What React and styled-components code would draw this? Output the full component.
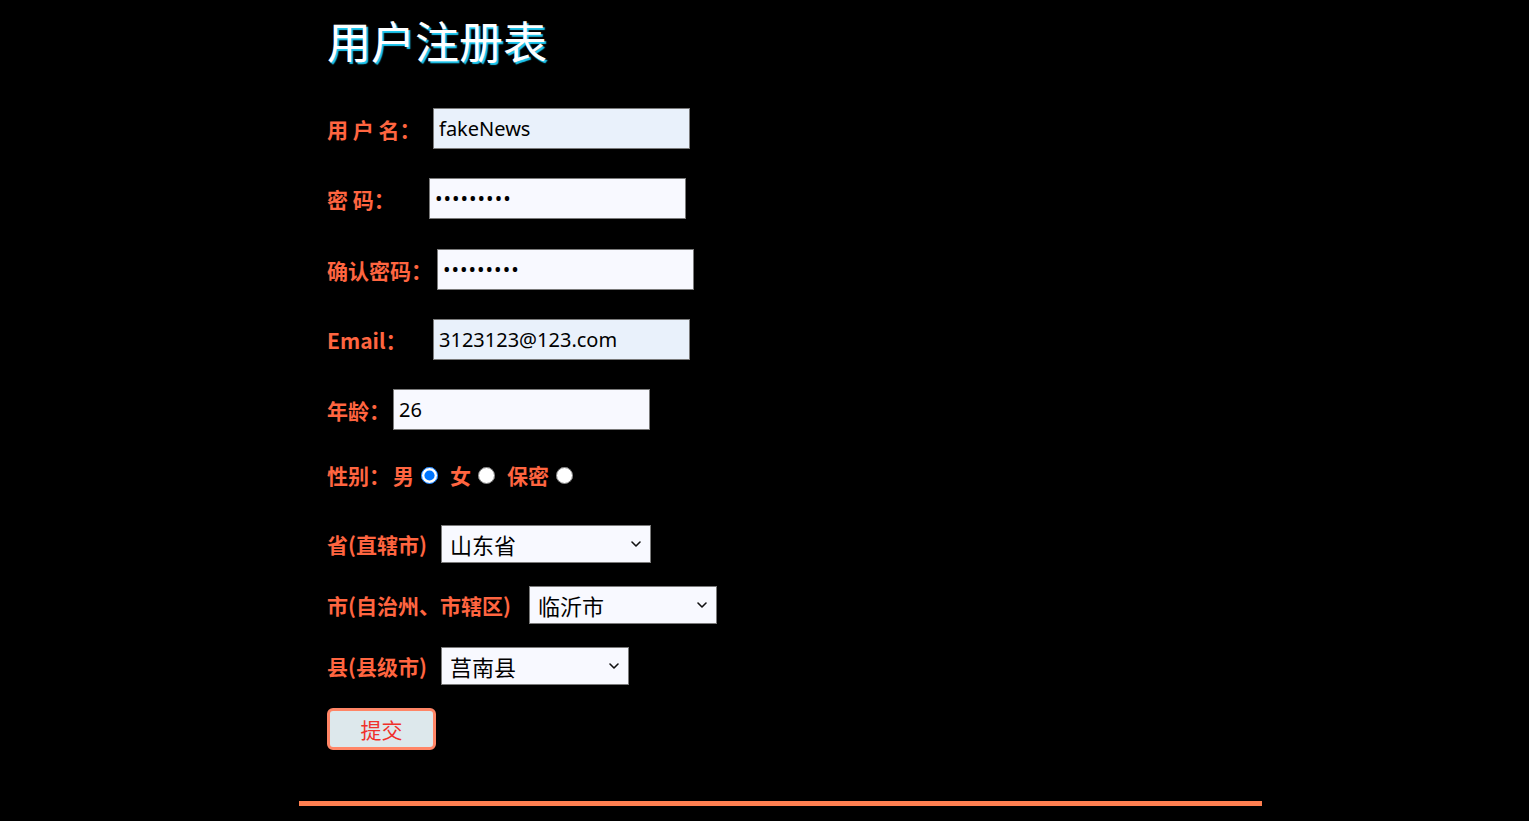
import React from "react";
import styled, { createGlobalStyle } from "styled-components";
import { ChevronDown } from "lucide-react";

const GlobalStyle = createGlobalStyle`
  html, body {
    margin: 0;
    padding: 0;
    background: #000;
  }
  body {
    font-family: "Noto Sans CJK SC", "Noto Sans", sans-serif;
  }
`;

const Page = styled.div`
  width: 963px;
  margin-left: 299px;
  min-height: 821px;
`;

const Form = styled.form`
  display: flex;
  flex-direction: column;
  padding-left: 28px;
`;

const Title = styled.h1`
  margin: 0;
  height: 80px;
  line-height: 80px;
  font-size: 44px;
  font-weight: 400;
  color: #fff;
  text-shadow: 2px 2px 1px #1ec8f0;
`;

const Row = styled.div`
  display: flex;
  align-items: center;
  height: ${(p) => p.h || 41}px;
  margin-top: ${(p) => p.mt || 0}px;
`;

const Label = styled.label`
  flex: none;
  width: ${(p) => p.w}px;
  color: #ff6540;
  font-size: 21px;
  font-weight: 700;
  white-space: pre;
`;

const TextInput = styled.input`
  box-sizing: border-box;
  width: 257px;
  height: 41px;
  padding: 0 5px;
  border: 1px solid #7a7a7a;
  background: ${(p) => (p.filled ? "#e9f1fb" : "#f8f9ff")};
  font-family: "Noto Sans", "Open Sans", sans-serif;
  font-size: 20px;
  letter-spacing: ${(p) => (p.type === "password" ? "1px" : "0")};
  color: #000;
  outline: none;
`;

const RadioText = styled.span`
  color: #ff6540;
  font-size: 21px;
  font-weight: 700;
`;

const Radio = styled.input`
  width: 17px;
  height: 17px;
  margin: 0 12px 0 7px;
  accent-color: #0075ff;
`;

const SelectWrap = styled.div`
  position: relative;
  width: ${(p) => p.w}px;
  height: 38px;

  svg {
    position: absolute;
    right: 7px;
    top: 11px;
    pointer-events: none;
  }
`;

const Select = styled.select`
  appearance: none;
  box-sizing: border-box;
  width: 100%;
  height: 38px;
  padding: 0 28px 0 8px;
  border: 1px solid #7a7a7a;
  border-radius: 0;
  background: #f8f9ff;
  font-family: "Noto Sans CJK SC", sans-serif;
  font-size: 22px;
  color: #000;
  outline: none;
`;

const Submit = styled.button`
  box-sizing: border-box;
  width: 109px;
  height: 42px;
  margin-top: 23px;
  border: 3px solid #ff8566;
  border-radius: 6px;
  background: #dde8ec;
  color: #f0302a;
  font-family: "Noto Sans CJK SC", sans-serif;
  font-size: 21px;
  cursor: pointer;
`;

const Rule = styled.div`
  height: 5px;
  margin-top: 51px;
  background: coral;
`;

function Dropdown({ w, value }) {
  return (
    <SelectWrap w={w}>
      <Select defaultValue={value}>
        <option>{value}</option>
      </Select>
      <ChevronDown size={16} strokeWidth={2.4} color="#111" />
    </SelectWrap>
  );
}

export default function App() {
  return (
    <Page>
      <GlobalStyle />
      <Form onSubmit={(e) => e.preventDefault()}>
        <Title>用户注册表</Title>

        <Row mt={28}>
          <Label w={106}>用 户 名：</Label>
          <TextInput type="text" filled defaultValue="fakeNews" />
        </Row>
        <Row mt={29}>
          <Label w={102}>密 码：</Label>
          <TextInput type="password" defaultValue="123456789" />
        </Row>
        <Row mt={30}>
          <Label w={110}>确认密码：</Label>
          <TextInput type="password" defaultValue="123456789" />
        </Row>
        <Row mt={29}>
          <Label w={106}>Email：</Label>
          <TextInput type="email" filled defaultValue="3123123@123.com" />
        </Row>
        <Row mt={29}>
          <Label w={66}>年龄：</Label>
          <TextInput type="number" defaultValue="26" />
        </Row>

        <Row mt={30} h={30}>
          <Label w={66}>性别：</Label>
          <RadioText>男</RadioText>
          <Radio type="radio" name="sex" defaultChecked />
          <RadioText>女</RadioText>
          <Radio type="radio" name="sex" />
          <RadioText>保密</RadioText>
          <Radio type="radio" name="sex" />
        </Row>

        <Row mt={35} h={38}>
          <Label w={114}>省(直辖市)</Label>
          <Dropdown w={210} value="山东省" />
        </Row>
        <Row mt={23} h={38}>
          <Label w={202}>市(自治州、市辖区)</Label>
          <Dropdown w={188} value="临沂市" />
        </Row>
        <Row mt={23} h={38}>
          <Label w={114}>县(县级市)</Label>
          <Dropdown w={188} value="莒南县" />
        </Row>

        <div>
          <Submit type="submit">提交</Submit>
        </div>
      </Form>
      <Rule />
    </Page>
  );
}
